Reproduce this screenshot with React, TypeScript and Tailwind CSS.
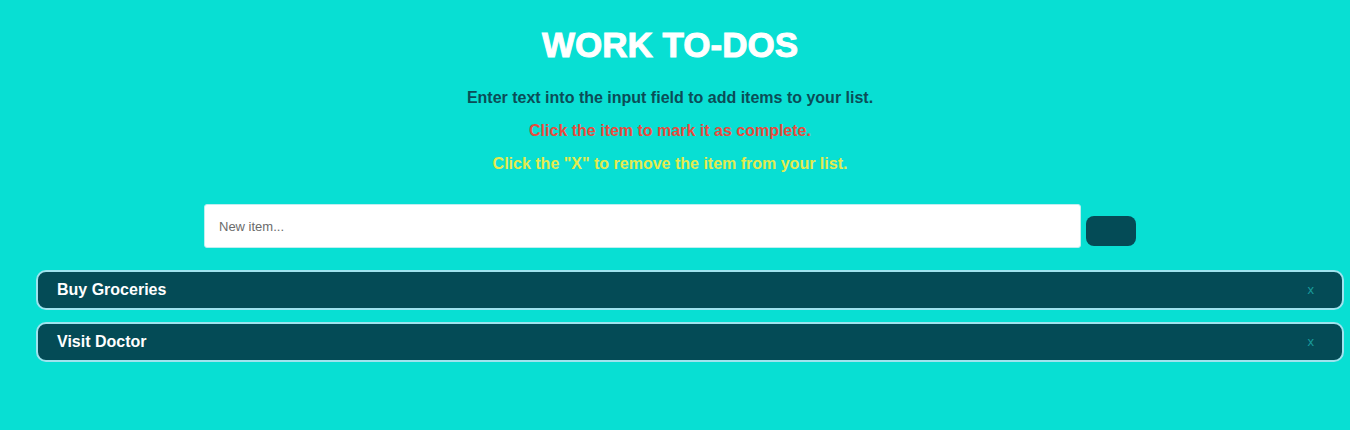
import React from "react";

export default function App() {
  const items = ["Buy Groceries", "Visit Doctor"];
  return (
    <div className="w-[1350px] h-[430px] bg-[#08dfd3] font-['Liberation_Sans',Arial,sans-serif] overflow-hidden">
      <div className="pr-[10px]">
        <h1 className="pt-[24px] text-center text-[35px] leading-[42px] font-black text-white [-webkit-text-stroke:1px_white]">
          WORK TO-DOS
        </h1>
        <div className="mt-[15px] text-center text-[16px] font-bold leading-[33px]">
          <p className="text-[#0b4d57]">Enter text into the input field to add items to your list.</p>
          <p className="text-[#e84b3d]">Click the item to mark it as complete.</p>
          <p className="text-[#e4ea4e]">Click the "X" to remove the item from your list.</p>
        </div>
      </div>
      <div className="mt-[24px] flex items-start justify-center pr-[10px] gap-[5px]">
        <input
          className="w-[877px] h-[44px] bg-white border border-[#bfeef0] rounded-[3px] px-[14px] text-[13px] text-[#333] placeholder:text-[#6b6b6b] outline-none"
          placeholder="New item..."
        />
        <button className="w-[50px] h-[30px] mt-[12px] bg-[#044b56] rounded-[8px]"></button>
      </div>
      <ul className="mt-[22px] ml-[36px] mr-[6px] flex flex-col gap-[12px]">
        {items.map((t) => (
          <li
            key={t}
            className="h-[40px] flex items-center justify-between bg-[#044b56] border-2 border-[#9fe3ee] rounded-[10px] pl-[19px] pr-[28px]"
          >
            <span className="text-white font-bold text-[16px]">{t}</span>
            <span className="text-[#1a9b9b] text-[13px]">x</span>
          </li>
        ))}
      </ul>
    </div>
  );
}
